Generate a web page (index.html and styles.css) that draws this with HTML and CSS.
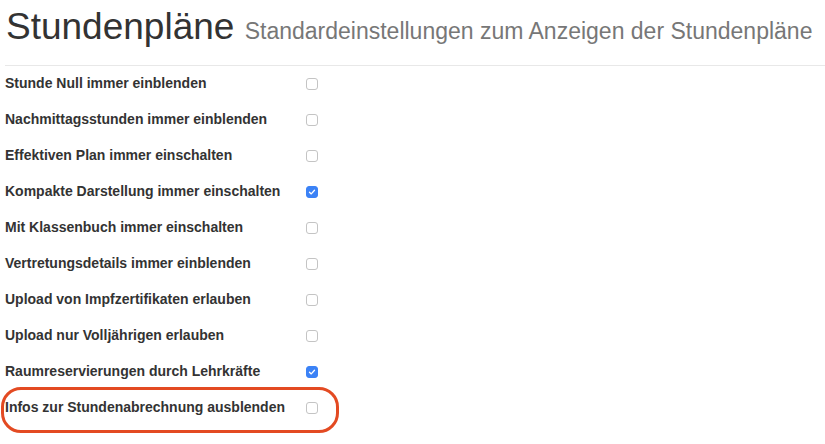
FILE: index.html
```html
<!DOCTYPE html>
<html lang="de">
<head>
<meta charset="utf-8">
<link rel="stylesheet" href="styles.css">
</head>
<body>
<div class="page">
  <div class="header">
    <h1 class="title">Stundenpläne <small class="subtitle">Standardeinstellungen zum Anzeigen der Stundenpläne</small></h1>
  </div>
  <div class="settings">
    <div class="row"><span class="label">Stunde Null immer einblenden</span><span class="box"></span></div>
    <div class="row"><span class="label">Nachmittagsstunden immer einblenden</span><span class="box"></span></div>
    <div class="row"><span class="label">Effektiven Plan immer einschalten</span><span class="box"></span></div>
    <div class="row"><span class="label">Kompakte Darstellung immer einschalten</span><span class="box checked"><svg viewBox="0 0 12 12" width="12" height="12"><path d="M3 6.2 L5.1 8.3 L9 3.9" fill="none" stroke="#fff" stroke-width="1.6" stroke-linecap="round" stroke-linejoin="round"/></svg></span></div>
    <div class="row"><span class="label">Mit Klassenbuch immer einschalten</span><span class="box"></span></div>
    <div class="row"><span class="label">Vertretungsdetails immer einblenden</span><span class="box"></span></div>
    <div class="row"><span class="label">Upload von Impfzertifikaten erlauben</span><span class="box"></span></div>
    <div class="row"><span class="label">Upload nur Volljährigen erlauben</span><span class="box"></span></div>
    <div class="row"><span class="label">Raumreservierungen durch Lehrkräfte</span><span class="box checked"><svg viewBox="0 0 12 12" width="12" height="12"><path d="M3 6.2 L5.1 8.3 L9 3.9" fill="none" stroke="#fff" stroke-width="1.6" stroke-linecap="round" stroke-linejoin="round"/></svg></span></div>
    <div class="row highlight"><span class="label">Infos zur Stundenabrechnung ausblenden</span><span class="box"></span></div>
  </div>
</div>
</body>
</html>
```
FILE: styles.css
```css
* { box-sizing: border-box; }
html, body { margin: 0; padding: 0; background: #fff; }
body {
  font-family: "Liberation Sans", Arial, Helvetica, sans-serif;
  color: #333;
  width: 825px;
  height: 444px;
  overflow: hidden;
}
.page { padding: 0 0 0 5px; }
.header {
  border-bottom: 1px solid #e8e8e8;
  padding: 4px 0 14px 1px;
  height: 66px;
}
.title {
  margin: 0;
  font-size: 37px;
  font-weight: 400;
  line-height: 46px;
  color: #333;
  white-space: nowrap;
}
.subtitle {
  font-size: 23px;
  color: #777;
  margin-left: 0;
}
.settings {
  display: flex;
  flex-direction: column;
}
.row {
  display: flex;
  align-items: center;
  height: 36px;
  position: relative;
}
.label {
  width: 301px;
  font-size: 14px;
  font-weight: 700;
  color: #333;
  position: relative;
  top: -1px;
}
.box {
  width: 12px;
  height: 12px;
  border: 1px solid #c4c4c4;
  border-radius: 3px;
  background: #fff;
  display: flex;
  align-items: center;
  justify-content: center;
}
.box.checked {
  background: #3b82f6;
  border-color: #3b82f6;
}
.box svg { display: block; }
.highlight::before {
  content: "";
  position: absolute;
  left: -4px;
  top: -3px;
  width: 332px;
  height: 40px;
  border: 3px solid #e34a22;
  border-radius: 20px;
  pointer-events: none;
}
```
